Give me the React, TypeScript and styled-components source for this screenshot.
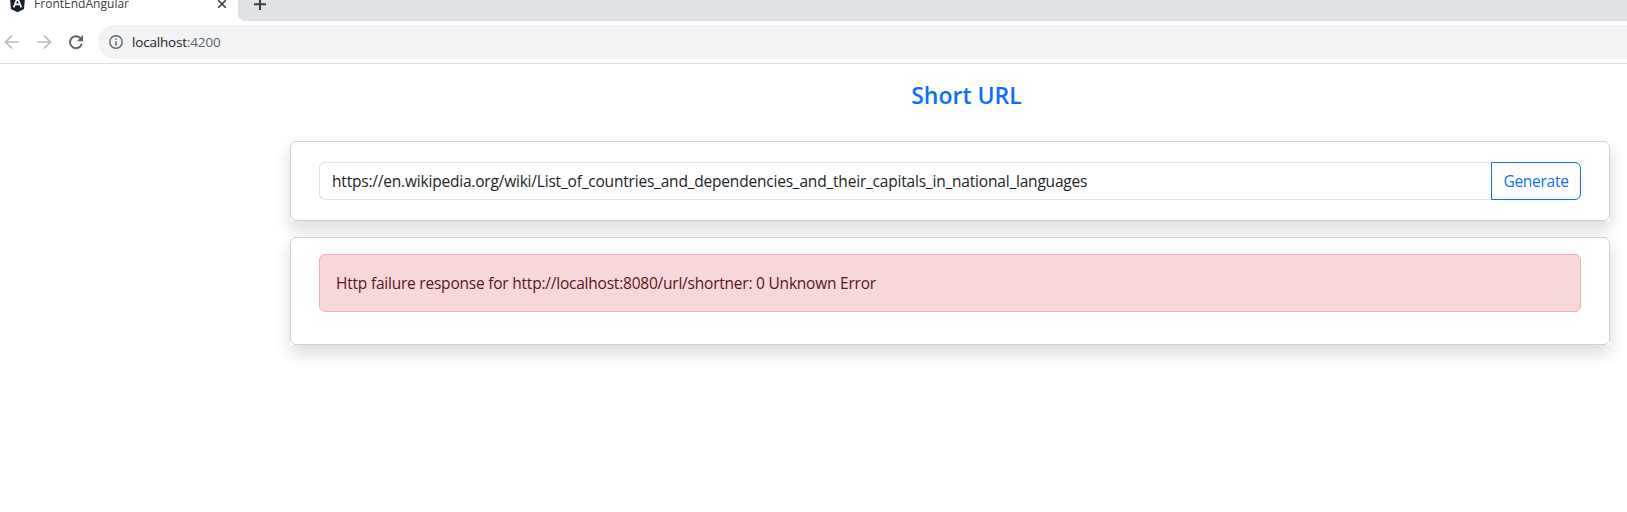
import React from "react";
import styled, { createGlobalStyle } from "styled-components";

const GlobalStyle = createGlobalStyle`
  * { box-sizing: border-box; }
  body { margin: 0; min-height: 100vh; background: #fff; color: #212529; font: 16px/24px "Segoe UI", "Open Sans", "Noto Sans", sans-serif; }
`;

const TabStrip = styled.div`
  display: flex;
  height: 21px;
  background: #fff;
`;
const Tab = styled.div`
  display: flex;
  width: 238px;
  height: 21px;
  background: #fff;
`;
const TabLogo = styled.svg`
  flex: none;
  margin-left: 9px;
`;
const TabTitle = styled.span`
  flex: 1;
  margin: -5px 0 0 8px;
  font-size: 12px;
  line-height: 18px;
  letter-spacing: -0.35px;
  color: #3c4043;
  white-space: nowrap;
  letter-spacing: 0.02px;
`;
const CloseIcon = styled.svg`
  flex: none;
  margin-right: 11px;
`;
const StripRest = styled.div`
  flex: 1;
  background: #dee1e6;
  border-bottom-left-radius: 7px;
  padding-left: 15px;
  svg { display: block; }
`;
const Toolbar = styled.div`
  display: flex;
  align-items: center;
  height: 43px;
  border-bottom: 1px solid #d9dbde;
`;
const NavIcons = styled.svg`
  flex: none;
`;
const AddressBar = styled.div`
  display: flex;
  align-items: center;
  flex: 1;
  height: 34px;
  padding-left: 11px;
  border-radius: 17px 0 0 17px;
  background: #f1f3f4;
`;
const Address = styled.span`
  margin-left: 9px;
  font-size: 13.5px;
  line-height: 20px;
  letter-spacing: -0.18px;
  color: #202124;
  white-space: nowrap;
`;
const Port = styled.span`
  color: #5f6368;
`;
const Main = styled.main`
  display: flex;
  flex-direction: column;
  width: 1320px;
  margin-left: 290px;
`;
const Title = styled.h1`
  height: 77px;
  margin: 0;
  padding: 16px 0 0 33px;
  text-align: center;
  font-size: 23px;
  font-weight: 600;
  line-height: 30px;
  letter-spacing: 0;
  color: #0d6efd;
`;
const Shadow = styled.section`
  margin-bottom: 16px;
  background: #fff;
  box-shadow: 0 8px 16px rgba(0, 0, 0, 0.15);
`;
const Card = styled.div<{ $height: number; $top: number }>`
  height: ${(p) => p.$height}px;
  padding: ${(p) => p.$top}px 28px 0;
  border: 1px solid #d0d1d2;
  border-radius: 6px;
`;
const InputGroup = styled.div`
  display: flex;
  height: 38px;
`;
const UrlInput = styled.div`
  flex: 1;
  padding: 6px 12px;
  border: 1px solid #dee2e6;
  border-right: 0;
  border-radius: 6px 0 0 6px;
  font-size: 15.5px;
  letter-spacing: -0.2px;
  white-space: nowrap;
`;
const GenerateButton = styled.button`
  width: 90px;
  padding: 0;
  border: 1px solid #0d6efd;
  border-radius: 0 6px 6px 0;
  background: #fff;
  color: #0d6efd;
  font: inherit;
  font-size: 15.5px;
  letter-spacing: -0.28px;
`;
const Alert = styled.div`
  height: 58px;
  padding: 16px;
  border: 1px solid #f1aeb5;
  border-radius: 6px;
  background: #f8d7da;
  color: #58151c;
  font-size: 15.5px;
  letter-spacing: -0.22px;
  white-space: nowrap;
`;

export default function App() {
  return (
    <>
      <GlobalStyle />
      <TabStrip>
        <Tab>
          <TabLogo width="17" height="13" viewBox="0 0 17 13">
            <path d="M1 -2H16L15 9L8.5 12.3L2 9Z" fill="#16202b" />
            <path d="M4.7 7.4L8.5 -2.2L12.3 7.4M6 4.4H11" fill="none" stroke="#fff" strokeWidth="1.7" />
          </TabLogo>
          <TabTitle>FrontEndAngular</TabTitle>
          <CloseIcon width="10" height="12" viewBox="0 0 10 12">
            <path d="M1.2 0.2L8.8 7.8M8.8 0.2L1.2 7.8" stroke="#3c4043" strokeWidth="1.6" />
          </CloseIcon>
        </Tab>
        <StripRest>
          <svg width="14" height="12" viewBox="0 0 14 12">
            <path d="M1 4.3H13M7 -2V10" stroke="#3c4043" strokeWidth="2" />
          </svg>
        </StripRest>
      </TabStrip>
      <Toolbar>
        <NavIcons width="98" height="34" viewBox="0 0 98 34" fill="none" strokeWidth="1.7">
          <path d="M19 17H6M12 10.5L5.5 17L12 23.5" stroke="#babcbe" />
          <path d="M37 17H50M44 10.5L50.5 17L44 23.5" stroke="#babcbe" />
          <path d="M80.4 13.1A6 6 0 1 0 81.8 18.8" stroke="#5f6368" strokeWidth="2" />
          <path d="M83 10V16.2H76.8Z" fill="#5f6368" />
        </NavIcons>
        <AddressBar>
          <svg width="14" height="14" viewBox="0 0 14 14" fill="none" stroke="#5f6368">
            <circle cx="7" cy="7" r="6.2" strokeWidth="1.4" />
            <path d="M7 6.2V10.4M7 3.4V5" strokeWidth="1.5" />
          </svg>
          <Address>localhost<Port>:4200</Port></Address>
        </AddressBar>
      </Toolbar>
      <Main>
        <Title>Short URL</Title>
        <Shadow>
          <Card $height={80} $top={20}>
            <InputGroup>
              <UrlInput>https://en.wikipedia.org/wiki/List_of_countries_and_dependencies_and_their_capitals_in_national_languages</UrlInput>
              <GenerateButton>Generate</GenerateButton>
            </InputGroup>
          </Card>
        </Shadow>
        <Shadow>
          <Card $height={108} $top={16}>
            <Alert>Http failure response for http://localhost:8080/url/shortner: 0 Unknown Error</Alert>
          </Card>
        </Shadow>
      </Main>
    </>
  );
}
